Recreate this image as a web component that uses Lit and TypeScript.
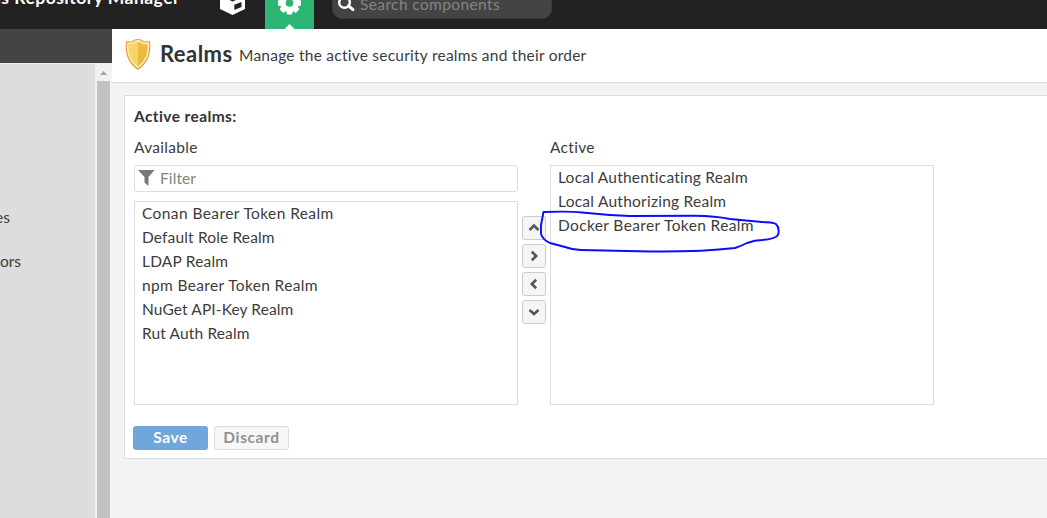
import { LitElement, html, css, svg } from "lit";
import { customElement } from "lit/decorators.js";

interface Item { name: string; spacing: number; }

const AVAILABLE: Item[] = [
  { name: "Conan Bearer Token Realm", spacing: 0.41 },
  { name: "Default Role Realm", spacing: 0.15 },
  { name: "LDAP Realm", spacing: 0.2 },
  { name: "npm Bearer Token Realm", spacing: 0.36 },
  { name: "NuGet API-Key Realm", spacing: 0.12 },
  { name: "Rut Auth Realm", spacing: 0.14 },
];
const ACTIVE: Item[] = [
  { name: "Local Authenticating Realm", spacing: 0.23 },
  { name: "Local Authorizing Realm", spacing: 0.25 },
  { name: "Docker Bearer Token Realm", spacing: 0.37 },
];
const ARROWS = ["M7.5 14 12 9.5 16.5 14", "M9.8 7.7 14.2 12 9.8 16.3", "M14.2 7.7 9.8 12 14.2 16.3", "M7.5 10 12 14 16.5 10"];

@customElement("app-root")
export class AppRoot extends LitElement {
  static styles = css`
    :host { display: block; width: 100%; height: 518px; overflow: hidden; position: relative; background: #f3f3f3; color: #3c3c3c; font: 15.5px/24px Lato, sans-serif; }
    * { box-sizing: border-box; }
    svg { display: block; }
    .top { height: 29px; background: #222; display: flex; overflow: hidden; }
    .brand { width: 208px; height: 29px; color: #fff; font: 700 17.5px/20px Lato, sans-serif; margin-top: -12px; white-space: nowrap; display: flex; justify-content: flex-end; padding-right: 28px; letter-spacing: .48px; }
    .mode { width: 49px; height: 29px; }
    .browse { margin-right: 8px; }
    .tabs { display: flex; }
    .search { margin-left: 18px; width: 220px; height: 30px; margin-top: -11px; background: #444; border: 1px solid #3b3b3b; border-radius: 10px; color: #858585; display: flex; font-size: 15.5px; line-height: 28px; letter-spacing: .38px; }
    .search svg { margin: 5px 0 0 4px; width: 23px; }
    .main { display: flex; height: 489px; }
    .side { width: 112px; display: flex; flex-direction: column; flex: none; }
    .sidehead { height: 34px; background: #444; }
    .sidebody { border-top: 1px solid #eee; flex: 1; display: flex; }
    .tree { background: #ddd; width: 95px; padding-top: 142px; overflow: hidden; }
    .node { height: 44px; line-height: 22px; display: flex; justify-content: flex-end; white-space: nowrap; }
    .n1 { width: 10px; } .n2 { width: 21px; }
    .scroll { width: 15px; background: #f1f1f1; padding-left: 2px; }
    .thumb { height: 437px; background: #c1c1c1; }
    .arrow { height: 17px; }
    .body { flex: 1; min-width: 0; }
    .head { height: 54px; background: #fff; border-bottom: 1px solid #ddd; display: flex; padding: 8px 0 0 11px; }
    h1 { color: #333; font: 700 22px/33px Lato, sans-serif; margin: 0 7px 0 7px; width: 72px; letter-spacing: .45px; white-space: nowrap; }
    .desc { line-height: 36px; letter-spacing: .24px; white-space: nowrap; }
    .panel { margin: 12px 0 0 12px; height: 364px; background: #fff; border: 1px solid #ddd; border-right: 0; padding: 8px 9px; }
    .title { color: #333; font-weight: 700; letter-spacing: .4px; }
    .cols { display: flex; margin-top: 7px; }
    .col { width: 384px; }
    .lab { height: 30px; letter-spacing: .3px; }
    .filter { height: 27px; border: 1px solid #ddd; border-radius: 3px; display: flex; color: #848484; line-height: 25px; margin-bottom: 9px; letter-spacing: .1px; }
    .filter svg { margin: 4px 5px 0 3px; }
    .list { border: 1px solid #ddd; height: 204px; padding-left: 7px; white-space: nowrap; }
    .list div { height: 24px; line-height: 22px; }
    .tall { height: 240px; }
    .moves { width: 32px; padding: 81px 4px 0; display: flex; flex-direction: column; gap: 4px; }
    .move { width: 24px; height: 24px; background: #f5f5f5; border: 1px solid #ccc; border-radius: 3px; }
    .move svg { margin: -1px; }
    .acts { display: flex; gap: 6px; margin: 21px 0 0 -1px; }
    .btn { width: 75px; height: 24px; border-radius: 3px; font-weight: 700; text-align: center; line-height: 23px; letter-spacing: .6px; }
    .save { background: #70a6d9; color: #fff; }
    .discard { background: #f7f7f7; border: 1px solid #ddd; color: #919191; line-height: 21px; }
    .ink { position: absolute; left: 530px; top: 200px; }
  `;

  private list(items: Item[]) {
    return items.map((i) => html`<div style="letter-spacing:${i.spacing}px"><span>${i.name}</span></div>`);
  }

  render() {
    return html`
      <div class="top">
        <div class="brand"><span>Nexus Repository Manager</span></div>
        <div class="tabs">
          <svg class="browse" width="49" height="29" viewBox="208 0 49 29">
            <path d="M220-5 232 -10 245-5V9L232.500 15 220 9Z" fill="#fff"/>
            <path d="M229.500 0H236L232.500 1.500ZM234.300 4.800 241.500 2V7L234.300 10Z" fill="#222"/>
          </svg>
        </div>
        <svg class="mode" viewBox="265 0 49 29">
          <rect x="265" width="49" height="29" fill="#2bb673"/>
          ${svg`<g fill="#fff">${[0, 45, 90, 135].map((a) => svg`<path transform="rotate(${a} 289.5 3)" d="M287-8.5h5l1 4v15l-1 4h-5l-1-4v-15Z"/>`)}<circle cx="289.5" cy="3" r="8.7"/></g>`}
          <circle cx="289.5" cy="3" r="3.8" fill="#2bb673"/>
          <path d="M284 29.5 289.5 24 295 29.5Z" fill="#fff"/>
        </svg>
        <div class="search">
          <svg width="23" height="20" viewBox="337 -5 23 20"><circle cx="344.5" cy="2.5" r="5.3" fill="none" stroke="#fff" stroke-width="2.4"/><path d="M348.5 5.8 353 9.6" stroke="#fff" stroke-width="3" stroke-linecap="round"/></svg>
          <span>Search components</span>
        </div>
      </div>
      <div class="main">
        <div class="side">
          <div class="sidehead"></div>
          <div class="sidebody">
            <div class="tree"><div class="node n1">Privileges</div><div class="node n2">Selectors</div></div>
            <div class="scroll">
              <svg class="arrow" width="13" height="17"><path d="M3 11 6.5 7 10 11Z" fill="#a3a3a3"/></svg>
              <div class="thumb"></div>
            </div>
          </div>
        </div>
        <div class="body">
          <div class="head">
            <svg width="30" height="36" viewBox="0 0 30 36">
              <defs><linearGradient id="gold" x2="1" y2="1"><stop stop-color="#f0c64a"/><stop offset="1" stop-color="#e8b040"/></linearGradient></defs>
              <path d="M15 3.5C12 3.5 11 5 8 5 6 5 4.5 4 3.4 5 2 18 6 27 15 33.5 24 27 28 18 26.6 5 25.5 4 24 5 22 5 19 5 18 3.5 15 3.5Z" fill="#999" opacity=".35"/>
              <path d="M15 2.5C12 2.5 10.6 3 9.5 5L3.5 4.8C2 18 6 26 15 32 24 26 28 18 26.5 4.8L20.5 5C19.4 3 18 2.5 15 2.5Z" fill="#fff1b5" stroke="#e3a13a" stroke-width="1.2"/>
              <path d="M15 5C12 5 11.5 6 10.5 7.2L5.5 7C5 17 8 24 15 29.5 22 24 25 17 24.5 7L19.5 7.2C18.5 6 18 5 15 5Z" fill="url(#gold)"/>
              <path d="M15 5C12 5 11.5 6 10.5 7.2L5.5 7C5 17 8 24 15 29.5Z" fill="#ffe57b" opacity=".6"/>
            </svg>
            <h1>Realms</h1><span class="desc">Manage the active security realms and their order</span>
          </div>
          <div class="panel">
            <div class="title">Active realms:</div>
            <div class="cols">
              <div class="col">
                <div class="lab">Available</div>
                <div class="filter"><svg width="17" height="17"><path d="M0 0H16.5L10.5 7V16L6.5 12.5V7Z" fill="#777"/></svg>Filter</div>
                <div class="list">${this.list(AVAILABLE)}</div>
              </div>
              <div class="moves">
                ${ARROWS.map((d) => html`<div class="move"><svg width="24" height="24"><path d=${d} fill="none" stroke="#555" stroke-width="2.6"/></svg></div>`)}
              </div>
              <div class="col">
                <div class="lab">Active</div>
                <div class="list tall">${this.list(ACTIVE)}</div>
              </div>
            </div>
            <div class="acts"><div class="btn save">Save</div><div class="btn discard">Discard</div></div>
          </div>
        </div>
      </div>
      <svg class="ink" width="260" height="60" viewBox="530 200 260 60"><path d="M543.5 212 541 225V234Q543 240 550 243L565 247Q573 250 581 250L650 251.5Q700 252 735 248Q741 246 747 243Q755 240 762 240Q775 239 778 235Q780 228 776 224Q772 222 762 222L730 219Q715 216 695 215.8L630 216Q605 215 582 212.5Q570 211 543.5 212Z" fill="none" stroke="#0b0bff" stroke-width="1.9" stroke-linejoin="round"/></svg>
    `;
  }
}
